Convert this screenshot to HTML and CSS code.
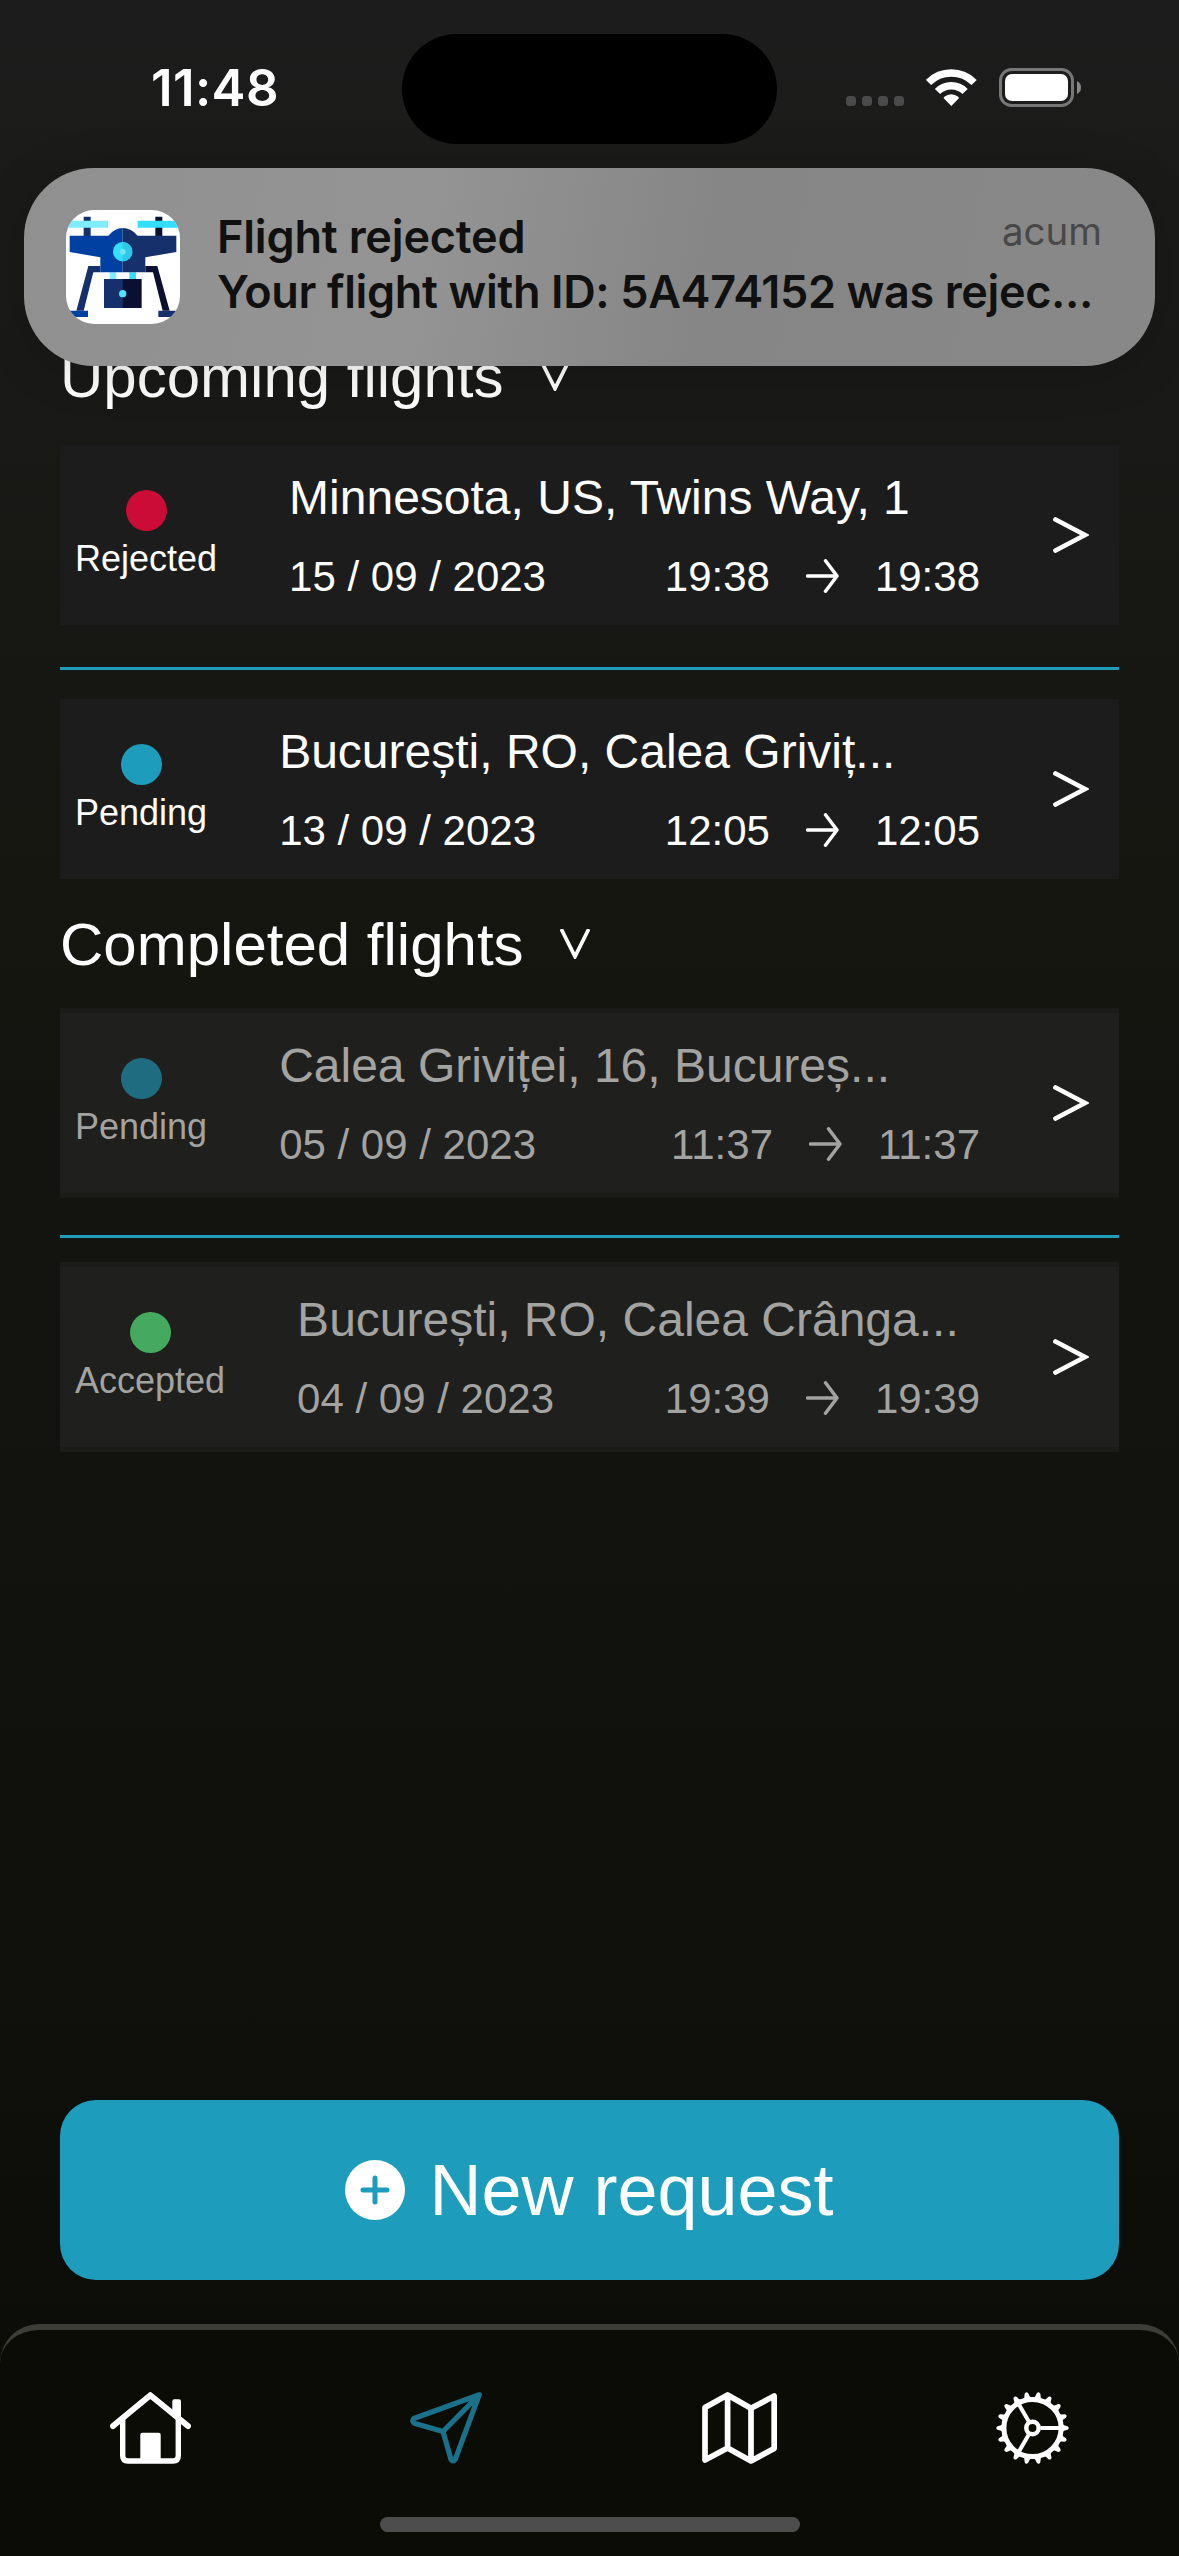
FILE: index.html
```html
<!DOCTYPE html>
<html lang="en">
<head>
<meta charset="utf-8">
<title>Flights</title>
<link rel="stylesheet" href="styles.css">
</head>
<body>
<svg class="defs" aria-hidden="true">
  <symbol id="chevron-down" viewBox="0 0 30 30"><path d="M2 1.5 15 27.5 28 1.5" fill="none" stroke="currentColor" stroke-width="3.8" stroke-linecap="round"/></symbol>
  <symbol id="chevron-right" viewBox="0 0 36 36"><path d="M2.500 2.500 32 18 2.500 33.500" fill="none" stroke="currentColor" stroke-width="4.800" stroke-linecap="round"/></symbol>
  <symbol id="arrow" viewBox="0 0 33 34"><path d="M1.500 17H31M19.500 1.800 31 17 19.500 32.200" fill="none" stroke="currentColor" stroke-width="3.500" stroke-linecap="round" stroke-linejoin="round"/></symbol>
</svg>
<div class="screen">
  <header class="status-bar">
    <time class="clock">11:48</time>
    <div class="island"></div>
    <div class="indicators">
      <div class="signal"><i></i><i></i><i></i><i></i></div>
      <svg class="wifi" viewBox="0 0 51 37"><g fill="none" stroke="#fff" stroke-width="7.400"><path d="M2.500 13.500A32.200 32.200 0 0 1 48.100 13.500M11.500 22.500A19.500 19.500 0 0 1 39.100 22.500"/></g><path d="M25.300 37 17.700 29.300Q17.500 28.500 18.400 27.800A10.700 10.700 0 0 1 32.200 27.800Q33.100 28.500 32.900 29.300Z" fill="#fff"/></svg>
      <svg class="battery" viewBox="0 0 83 39"><rect x="1.500" y="1.500" width="72" height="36" rx="11" fill="none" stroke="#777" stroke-width="3"/><rect x="6" y="6" width="63" height="27" rx="7" fill="#fff"/><path d="M78 13Q82 15 82 19.500T78 26Z" fill="#888"/></svg>
    </div>
  </header>

  <main class="content">
    <h2 class="section-title">Upcoming flights<svg class="toggle"><use href="#chevron-down"/></svg></h2>
    <div class="list">
      <article class="flight">
        <div class="state"><span class="dot rejected"></span>Rejected</div>
        <div class="info">
          <h3 class="place">Minnesota, US, Twins Way, 1</h3>
          <div class="when"><span>15 / 09 / 2023</span><span class="times">19:38<svg class="to"><use href="#arrow"/></svg>19:38</span></div>
        </div>
        <svg class="open"><use href="#chevron-right"/></svg>
      </article>
      <hr class="divider">
      <article class="flight">
        <div class="state"><span class="dot pending"></span>Pending</div>
        <div class="info">
          <h3 class="place">București, RO, Calea Griviț...</h3>
          <div class="when"><span>13 / 09 / 2023</span><span class="times">12:05<svg class="to"><use href="#arrow"/></svg>12:05</span></div>
        </div>
        <svg class="open"><use href="#chevron-right"/></svg>
      </article>
    </div>

    <h2 class="section-title">Completed flights<svg class="toggle"><use href="#chevron-down"/></svg></h2>
    <div class="list">
      <article class="flight done">
        <div class="state"><span class="dot pending-dim"></span>Pending</div>
        <div class="info">
          <h3 class="place">Calea Griviței, 16, Bucureș...</h3>
          <div class="when"><span>05 / 09 / 2023</span><span class="times">11:37<svg class="to"><use href="#arrow"/></svg>11:37</span></div>
        </div>
        <svg class="open"><use href="#chevron-right"/></svg>
      </article>
      <hr class="divider">
      <article class="flight done">
        <div class="state"><span class="dot accepted"></span>Accepted</div>
        <div class="info">
          <h3 class="place">București, RO, Calea Crânga...</h3>
          <div class="when"><span>04 / 09 / 2023</span><span class="times">19:39<svg class="to"><use href="#arrow"/></svg>19:39</span></div>
        </div>
        <svg class="open"><use href="#chevron-right"/></svg>
      </article>
    </div>
  </main>

  <button class="new-request">
    <svg class="plus" viewBox="0 0 60 60"><circle cx="30" cy="30" r="30" fill="#fff"/><path d="M30 18V42M18 30H42" stroke="#1e9cbc" stroke-width="5" stroke-linecap="round"/></svg>
    New request
  </button>

  <nav class="tab-bar">
    <div class="tabs">
      <svg class="tab-home" viewBox="0 0 81 72"><g fill="none" stroke="currentColor" stroke-linecap="round" stroke-linejoin="round"><path d="M3 34 40.300 3.200 78 34" stroke-width="6"/><path d="M12.700 27V63.500Q12.700 69 18 69H63Q68.300 69 68.300 63.500V27" stroke-width="5.400"/></g><path d="M62.300 25V9.300Q62.300 7.300 64.300 7.300H69Q71 7.300 71 9.300V30ZM30.300 69V42.700Q30.300 40.700 32.300 40.700H48.700Q50.700 40.700 50.700 42.700V69Z" fill="currentColor"/></svg>
      <svg class="tab-send" viewBox="0 0 72 72"><path d="M69.200 2.800 3.800 26.500Q1.500 29 4.300 31.300L33 39.500 41 67.500Q43 70.500 45.200 67.500ZM33 39.500 69.200 2.800" fill="none" stroke="currentColor" stroke-width="5.200" stroke-linejoin="round"/></svg>
      <svg class="tab-map" viewBox="0 0 75 72"><path d="M3 15.500 25.600 3 49 16.300 72.200 4V56.500L49 69 25.600 56 3 68ZM25.600 3V56M49 16.300V69" fill="none" stroke="currentColor" stroke-width="5.700" stroke-linejoin="round"/></svg>
      <svg class="tab-gear" viewBox="-36.500 -36 73 72">
        <defs><path id="cog" d="M29-5 31.500-2.800 35-1.800Q37.500 0 35 1.800L31.500 2.800 29 5Z" fill="currentColor"/></defs>
        <g fill="none" stroke="currentColor"><circle r="28.600" stroke-width="5"/><circle r="6.200" stroke-width="4.500"/><path d="M8 0H28M-4-6.900-14-24.200M-4 6.900-14 24.200" stroke-width="4"/></g>
        <use href="#cog"/><use href="#cog" transform="rotate(20)"/><use href="#cog" transform="rotate(40)"/><use href="#cog" transform="rotate(60)"/><use href="#cog" transform="rotate(80)"/><use href="#cog" transform="rotate(100)"/><use href="#cog" transform="rotate(120)"/><use href="#cog" transform="rotate(140)"/><use href="#cog" transform="rotate(160)"/><use href="#cog" transform="rotate(180)"/><use href="#cog" transform="rotate(200)"/><use href="#cog" transform="rotate(220)"/><use href="#cog" transform="rotate(240)"/><use href="#cog" transform="rotate(260)"/><use href="#cog" transform="rotate(280)"/><use href="#cog" transform="rotate(300)"/><use href="#cog" transform="rotate(320)"/><use href="#cog" transform="rotate(340)"/>
      </svg>
    </div>
    <div class="home-indicator"></div>
  </nav>

  <aside class="notification">
    <svg class="app-icon" viewBox="0 0 342 342">
      <rect width="342" height="342" fill="#fff"/>
      <path d="M53 20h21v60H53ZM67 168h36v19H82L53 302H31Z" fill="#15306a"/>
      <path d="M268 20h21v60h-21ZM238 168h36L311 302H290L261 187H238Z" fill="#0b1033"/>
      <path d="M0 32H126V53H0ZM131 187h20v20h-20Z" fill="#7fecff"/>
      <path d="M215 32H342V53H215ZM190 187h20v20h-20Z" fill="#33deff"/>
      <path d="M11 77H127Q146 54 170 54V187H103V142L11 126ZM11 302H66V321H11Z" fill="#0040a0"/>
      <path d="M331 77H215Q196 54 170 54V187H238V142L331 126ZM277 302H331V321H277ZM114 207H171V294H114Z" fill="#15306a"/>
      <path d="M170.500 207H227V294H170.500Z" fill="#0b1033"/>
      <circle cx="170" cy="125" r="29" fill="#33deff"/><path d="M170 96A29 29 0 0 1 170 154Z" fill="#2fc8e8"/>
      <circle cx="170" cy="125" r="9" fill="#6fe6fa"/><circle cx="170" cy="251" r="11" fill="#4fe2fa"/>
    </svg>
    <div class="message">
      <div class="message-head"><strong class="message-title">Flight rejected</strong><span class="message-time">acum</span></div>
      <p class="message-body">Your flight with ID: 5A474152 was rejec...</p>
    </div>
  </aside>
</div>
</body>
</html>
```
FILE: styles.css
```css
* { box-sizing: border-box; }
body { margin: 0; background: #0c0c06; }
.defs { position: absolute; width: 0; height: 0; }
h2, h3, p, hr { margin: 0; font-weight: 400; }
svg { display: block; flex: none; }

.screen {
  position: relative;
  display: flex;
  flex-direction: column;
  width: 1179px;
  height: 2556px;
  overflow: hidden;
  color: #fff;
  font-family: "Liberation Sans", Arial, sans-serif;
  background: linear-gradient(#1c1c1c 0, #191a17 350px, #151610 880px, #12120f 1480px, #0f100b 2060px, #0c0d08 2320px, #0c0c06 100%);
}

.status-bar {
  display: grid;
  grid-template-columns: 402px 375px 1fr;
  height: 168px;
  padding-top: 34px;
}
.clock {
  padding: 24px 0 0 151px;
  font: 600 51px/60px Inter, sans-serif;
  letter-spacing: .4px;
}
.island { height: 110px; border-radius: 55px; background: #000; }
.indicators { display: flex; height: 39px; margin: 34px 0 0 69px; }
.signal { display: flex; gap: 6px; margin: 28px 22px 0 0; }
.signal i { width: 10px; height: 10px; border-radius: 3.5px; background: #4b4b4b; }
.wifi { width: 51px; height: 37px; margin: 1px 22px 0 0; }
.battery { width: 83px; height: 39px; }

.content { flex: 1; padding: 172px 60px 0; }
.section-title {
  display: flex;
  align-items: center;
  gap: 36px;
  height: 72px;
  font-size: 60px;
  line-height: 73px;
}
.toggle { width: 30px; height: 30px; }
.list { padding: 33px 0 29px; }
.flight {
  display: flex;
  height: 180px;
  padding: 0 30px 0 15px;
  background: #1c1c1c;
}
.flight.done {
  background: #1f1f1e;
  box-shadow: 0 -5px #1b1b18, 0 5px #1b1b18;
}
.state {
  display: flex;
  flex-direction: column;
  align-items: center;
  gap: 5px;
  padding-top: 45px;
  font-size: 36px;
  line-height: 46px;
}
.dot { width: 41px; height: 41px; border-radius: 50%; }
.rejected { background: #cb0c37; }
.pending { background: #1e9cbc; }
.pending-dim { background: #1f6c80; }
.accepted { background: #45a95f; }
.info {
  flex: 1;
  display: flex;
  flex-direction: column;
  gap: 25px;
  padding-top: 24px;
  margin: 0 73px 0 72px;
}
.place { font-size: 48px; line-height: 58px; white-space: nowrap; }
.when {
  display: flex;
  justify-content: space-between;
  font-size: 42px;
  line-height: 50px;
}
.times { display: flex; align-items: center; gap: 36px; }
.to { width: 33px; height: 34px; margin-top: -3px; }
.done .state, .done .info { color: #a3a3a2; }
.open { width: 36px; height: 36px; align-self: center; }
.divider { height: 3px; margin: 42px 0 29px; border: 0; background: #1e9cbc; }

.new-request {
  display: flex;
  align-items: center;
  justify-content: center;
  gap: 24px;
  height: 180px;
  margin: 0 60px 44px;
  padding: 0;
  border: 0;
  border-radius: 36px;
  background: #1e9cbc;
  color: #fff;
  font: 400 72px/84px "Liberation Sans", Arial, sans-serif;
}
.plus { width: 60px; height: 60px; }

.tab-bar {
  display: flex;
  flex-direction: column;
  align-items: center;
  height: 232px;
  border-top: 6px solid #3d3d38;
  border-radius: 39px 39px 0 0;
  background: #0c0c06;
}
.tabs {
  display: flex;
  justify-content: space-between;
  width: 100%;
  padding: 62px 110px 53px;
}
.tabs svg { height: 72px; }
.tab-home { width: 81px; }
.tab-send { width: 72px; color: #1a7189; }
.tab-map { width: 75px; }
.tab-gear { width: 73px; }
.home-indicator { width: 420px; height: 15px; border-radius: 8px; background: #4d4d4d; }

/* Banner floats above the screen content */
.notification {
  position: absolute;
  top: 168px;
  left: 24px;
  display: flex;
  align-items: center;
  gap: 37px;
  width: 1131px;
  height: 198px;
  padding: 0 53px 0 42px;
  border-radius: 70px;
  background: linear-gradient(100deg, #909090 0, #949494 35%, #868686 60%, #888 100%);
  box-shadow: 0 6px 50px rgba(0, 0, 0, .16);
  color: #101010;
  font-family: Inter, sans-serif;
}
.app-icon { width: 114px; height: 114px; border-radius: 28px; }
.message { flex: 1; padding-bottom: 6px; }
.message-head { display: flex; justify-content: space-between; }
.message-title, .message-body { font-size: 45px; font-weight: 600; line-height: 55px; white-space: nowrap; }
.message-title { letter-spacing: -.18px; }
.message-body { letter-spacing: -.36px; }
.message-time { font-size: 38.5px; line-height: 44px; color: #484848; }
```
